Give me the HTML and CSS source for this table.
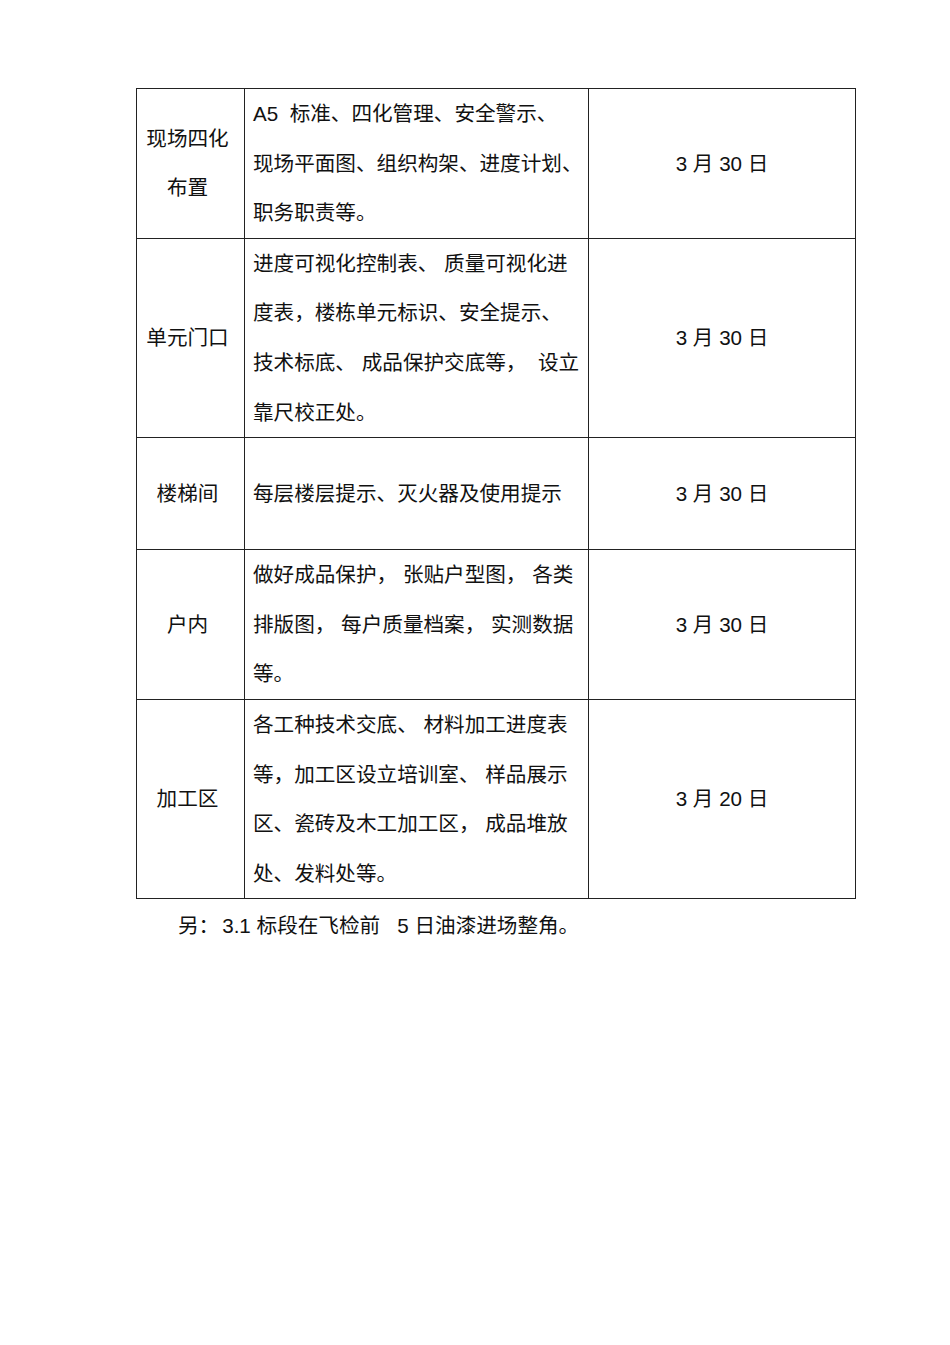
FILE: index.html
```html
<!DOCTYPE html>
<html lang="zh">
<head>
<meta charset="utf-8">
<title>表</title>
<link rel="stylesheet" href="styles.css">
</head>
<body>
<div class="page">
  <table class="plan">
    <colgroup>
      <col class="c1">
      <col class="c2">
      <col class="c3">
    </colgroup>
    <tr class="r1">
      <td class="area">现场四化<br>布置</td>
      <td class="desc">A5&nbsp; 标准、四化管理、安全警示、<br>现场平面图、组织构架、进度计划、<br>职务职责等。</td>
      <td class="date">3 月 30 日</td>
    </tr>
    <tr class="r2">
      <td class="area">单元门口</td>
      <td class="desc">进度可视化控制表、 质量可视化进<br>度表，楼栋单元标识、安全提示、<br>技术标底、 成品保护交底等，&nbsp; 设立<br>靠尺校正处。</td>
      <td class="date">3 月 30 日</td>
    </tr>
    <tr class="r3">
      <td class="area">楼梯间</td>
      <td class="desc">每层楼层提示、灭火器及使用提示</td>
      <td class="date">3 月 30 日</td>
    </tr>
    <tr class="r4">
      <td class="area">户内</td>
      <td class="desc">做好成品保护， 张贴户型图， 各类<br>排版图， 每户质量档案， 实测数据<br>等。</td>
      <td class="date">3 月 30 日</td>
    </tr>
    <tr class="r5">
      <td class="area">加工区</td>
      <td class="desc">各工种技术交底、 材料加工进度表<br>等，加工区设立培训室、 样品展示<br>区、瓷砖及木工加工区， 成品堆放<br>处、发料处等。</td>
      <td class="date">3 月 20 日</td>
    </tr>
  </table>
  <p class="note">另：<span class="gap"></span>3.1 标段在飞检前&nbsp;&nbsp; 5 日油漆进场整角。</p>
</div>
</body>
</html>
```

FILE: styles.css
```css
html, body {
  margin: 0;
  padding: 0;
  background: #ffffff;
}

body {
  font-family: "Liberation Sans", "Noto Sans CJK SC", sans-serif;
  font-size: 20.6px;
  color: #111111;
}

.page {
  padding: 88px 0 0 136px;
}

.plan {
  border-collapse: collapse;
  width: 719px;
  table-layout: fixed;
}

.c1 { width: 108px; }
.c2 { width: 344px; }
.c3 { width: 267px; }

.plan td {
  border: 1px solid #222222;
  line-height: 49.6px;
  padding: 0;
  vertical-align: middle;
}

.plan td.area {
  text-align: center;
  padding-right: 6px;
}

.plan td.desc {
  text-align: left;
  padding-left: 8px;
  white-space: nowrap;
}

.plan td.date {
  text-align: center;
}

.r3 td {
  height: 111px;
}

.note {
  margin: 0;
  padding-left: 42px;
  line-height: 53px;
}

.gap {
  display: inline-block;
  width: 3px;
}
```
